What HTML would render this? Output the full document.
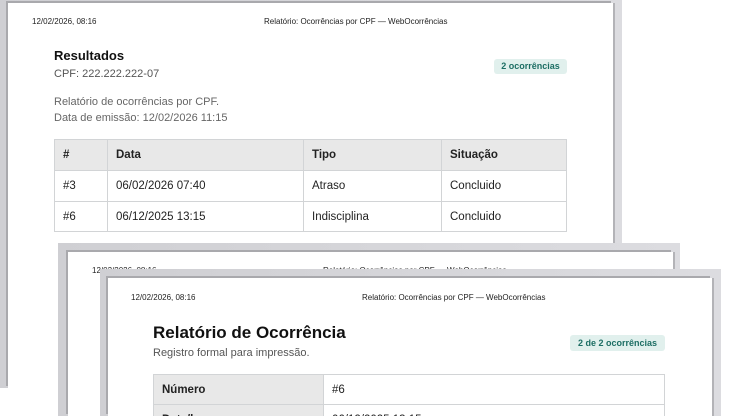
<!DOCTYPE html>
<html><head><meta charset="utf-8"><style>
*{margin:0;padding:0;box-sizing:border-box}
body{width:735px;height:416px;overflow:hidden;background:#fff;position:relative;font-family:"Liberation Sans",sans-serif;color:#222}
.frame{position:absolute;background:linear-gradient(90deg,#cfcfd3,#dcdce0);}
.page{position:absolute;background:#fff;box-shadow:-2px -2px 0 #a9a9ad, 2px 0 0 #b3b3b7;overflow:hidden}
.t{position:absolute;white-space:nowrap}
.hd{font-size:8px;color:#222}
.badge{position:absolute;background:#e1f0ed;color:#1d6e64;font-weight:bold;font-size:9px;border-radius:3px;text-align:center}
table{position:absolute;border-collapse:collapse;font-size:11.5px;color:#222}
td,th{border:1px solid #d2d4d6;text-align:left;padding:0 8px;font-weight:normal}
th{background:#e8e8e8;font-weight:bold}
</style></head><body>

<div class="frame" style="left:0;top:0;width:622px;height:388px"></div>
<div class="page" style="left:8px;top:3px;width:605px;height:385px">
  <div class="t hd" style="left:24px;top:14px">12/02/2026, 08:16</div>
  <div class="t hd" style="left:256px;top:14px">Relatório: Ocorrências por CPF — WebOcorrências</div>
  <div class="t" style="left:46px;top:45px;font-size:13px;font-weight:bold;color:#111">Resultados</div>
  <div class="t" style="left:46px;top:65px;font-size:11px;color:#555">CPF: 222.222.222-07</div>
  <div class="badge" style="left:486px;top:56px;width:73px;height:15px;line-height:15px">2 ocorrências</div>
  <div class="t" style="left:46px;top:93px;font-size:11px;color:#666">Relatório de ocorrências por CPF.</div>
  <div class="t" style="left:46px;top:109px;font-size:11px;color:#666">Data de emissão: 12/02/2026 11:15</div>
  <table style="left:46px;top:136px;width:513px">
    <tr style="height:31px"><th style="width:53px">#</th><th style="width:196px">Data</th><th style="width:138px">Tipo</th><th>Situação</th></tr>
    <tr style="height:31px"><td>#3</td><td>06/02/2026 07:40</td><td>Atraso</td><td>Concluido</td></tr>
    <tr style="height:30px"><td>#6</td><td>06/12/2025 13:15</td><td>Indisciplina</td><td>Concluido</td></tr>
  </table>
</div>

<div class="frame" style="left:58px;top:243px;width:622px;height:173px"></div>
<div class="page" style="left:68px;top:252px;width:605px;height:164px">
  <div class="t hd" style="left:24px;top:14px">12/02/2026, 08:16</div>
  <div class="t hd" style="left:255px;top:14px">Relatório: Ocorrências por CPF — WebOcorrências</div>
</div>

<div class="frame" style="left:100px;top:269px;width:621px;height:147px"></div>
<div class="page" style="left:108px;top:278px;width:604px;height:138px">
  <div class="t hd" style="left:23px;top:15px">12/02/2026, 08:16</div>
  <div class="t hd" style="left:254px;top:15px">Relatório: Ocorrências por CPF — WebOcorrências</div>
  <div class="t" style="left:45px;top:45px;font-size:17px;font-weight:bold;color:#111">Relatório de Ocorrência</div>
  <div class="t" style="left:45px;top:69px;font-size:11px;color:#555">Registro formal para impressão.</div>
  <div class="badge" style="left:462px;top:57px;width:95px;height:16px;line-height:16px">2 de 2 ocorrências</div>
  <table style="left:45px;top:96px;width:512px">
    <tr style="height:30px"><th style="width:170px">Número</th><td>#6</td></tr>
    <tr style="height:30px"><th>Data/hora</th><td>06/12/2025 13:15</td></tr>
  </table>
</div>
</body></html>
